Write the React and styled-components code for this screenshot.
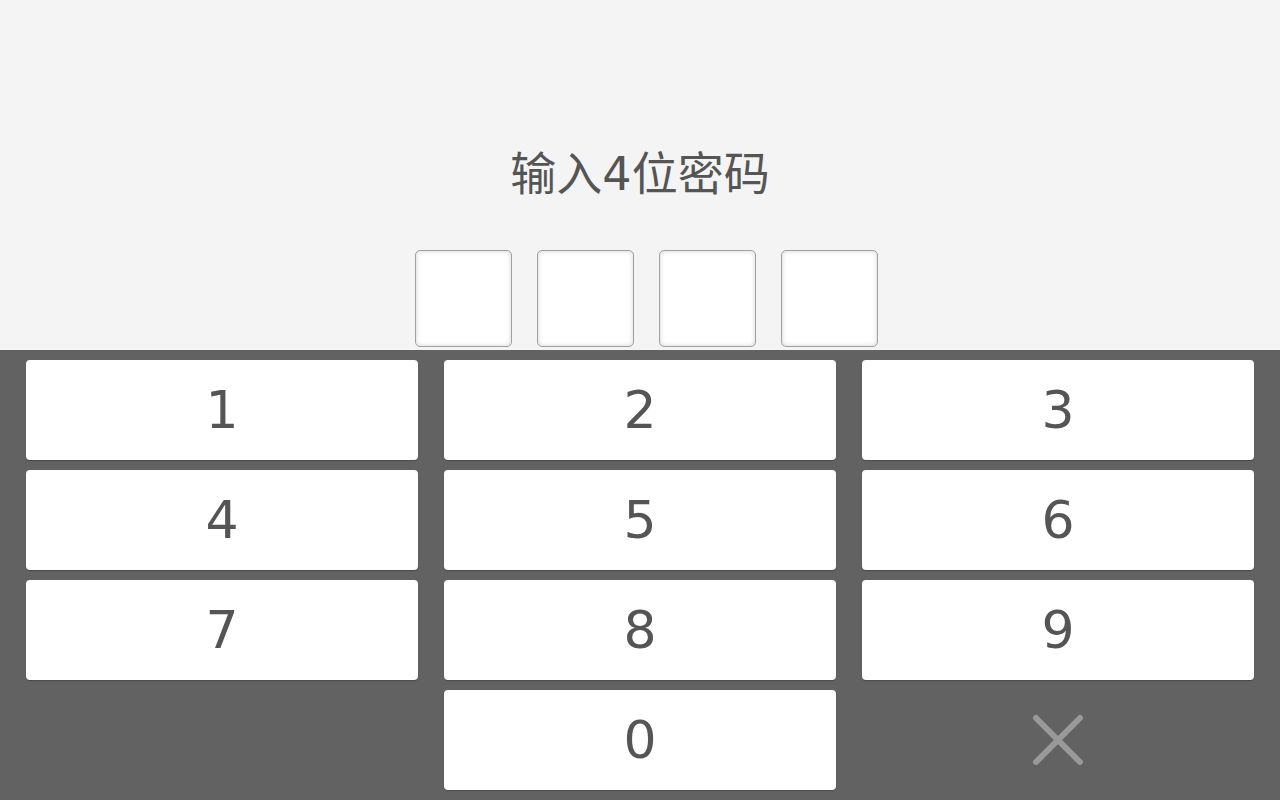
import React, { useState } from 'react'
import styled, { createGlobalStyle } from 'styled-components'

const GlobalStyle = createGlobalStyle`
  html, body {
    margin: 0;
    padding: 0;
    height: 100%;
    background: #f4f4f4;
    font-family: "DejaVu Sans", "Noto Sans CJK SC", sans-serif;
  }
`

const Page = styled.div`
  width: 1280px;
  height: 800px;
  display: flex;
  flex-direction: column;
  overflow: hidden;
`

const Header = styled.div`
  height: 350px;
  background: #f4f4f4;
  display: flex;
  flex-direction: column;
  align-items: center;
  box-sizing: border-box;
  padding-top: 146px;
`

const Title = styled.h1`
  margin: 0;
  font-size: 46px;
  font-weight: normal;
  line-height: 56px;
  color: #555;
`

const Boxes = styled.div`
  display: flex;
  gap: 25px;
  margin-top: 48px;
  padding-left: 13px;
`

const Box = styled.div`
  width: 97px;
  height: 97px;
  box-sizing: border-box;
  background: #fff;
  border: 1px solid #a0a0a0;
  border-radius: 5px;
  box-shadow: inset 0 0 5px rgba(0, 0, 0, 0.18);
  display: flex;
  align-items: center;
  justify-content: center;
  font-size: 40px;
  color: #555;
`

const Pad = styled.div`
  flex: 1;
  background: #626262;
  display: grid;
  grid-template-columns: repeat(3, 392px);
  grid-auto-rows: 100px;
  column-gap: 26px;
  row-gap: 10px;
  padding: 10px 26px;
`

const Key = styled.button`
  border: none;
  border-radius: 4px;
  background: ${(props) => (props.blank ? 'transparent' : '#fff')};
  box-shadow: ${(props) => (props.blank ? 'none' : '0 1px 1px rgba(0, 0, 0, 0.25)')};
  font-family: "DejaVu Sans", sans-serif;
  font-size: 52px;
  color: #555;
  display: flex;
  align-items: center;
  justify-content: center;
  padding: 0;
  cursor: pointer;
  visibility: ${(props) => (props.hidden ? 'hidden' : 'visible')};
`

const DelIcon = () => (
  <svg width="56" height="56" viewBox="0 0 56 56">
    <path d="M6 6 L50 50 M50 6 L6 50" stroke="#999" strokeWidth="6" strokeLinecap="round" fill="none" />
  </svg>
)

const App = () => {
  const [code, setCode] = useState('')

  const press = (d) => {
    if (code.length < 4) setCode(code + d)
  }

  const digits = ['1', '2', '3', '4', '5', '6', '7', '8', '9']

  return (
    <Page>
      <GlobalStyle />
      <Header>
        <Title>输入4位密码</Title>
        <Boxes>
          {[0, 1, 2, 3].map((i) => (
            <Box key={i}>{code[i] ? '•' : ''}</Box>
          ))}
        </Boxes>
      </Header>
      <Pad>
        {digits.map((d) => (
          <Key key={d} onClick={() => press(d)}>
            {d}
          </Key>
        ))}
        <Key hidden />
        <Key onClick={() => press('0')}>0</Key>
        <Key blank onClick={() => setCode(code.slice(0, -1))}>
          <DelIcon />
        </Key>
      </Pad>
    </Page>
  )
}

export default App
